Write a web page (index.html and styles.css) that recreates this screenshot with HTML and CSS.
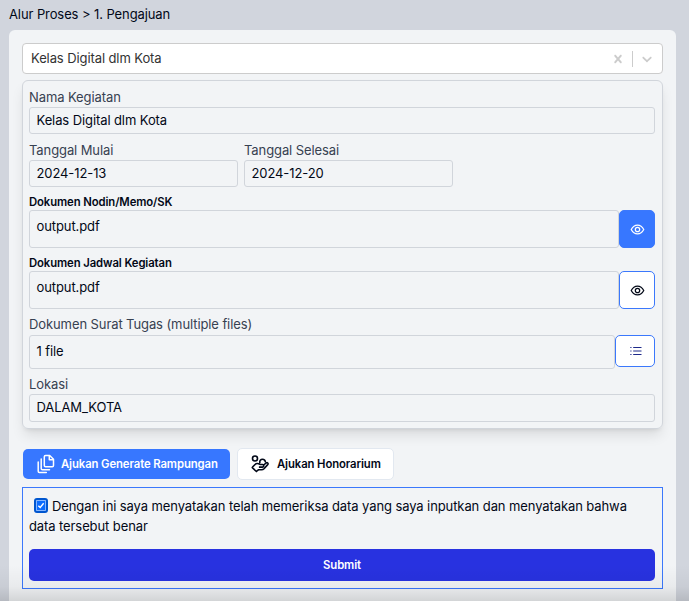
FILE: index.html
```html
<!DOCTYPE html>
<html lang="id">
<head>
<meta charset="utf-8">
<title>Pengajuan</title>
<link rel="stylesheet" href="styles.css">
</head>
<body>
<nav class="crumbs">Alur Proses &gt; 1. Pengajuan</nav>
<main class="panel">
  <div class="select">
    <span class="select-value">Kelas Digital dlm Kota</span>
    <svg class="clear" viewBox="0 0 20 20"><path d="M14.348 14.849c-0.469 0.469-1.229 0.469-1.697 0l-2.651-3.030-2.651 3.029c-0.469 0.469-1.229 0.469-1.697 0-0.469-0.469-0.469-1.229 0-1.697l2.758-3.150-2.759-3.152c-0.469-0.469-0.469-1.228 0-1.697s1.228-0.469 1.697 0l2.652 3.031 2.651-3.031c0.469-0.469 1.228-0.469 1.697 0s0.469 1.229 0 1.697l-2.758 3.152 2.758 3.150c0.469 0.469 0.469 1.229 0 1.698z"/></svg>
    <span class="separator"></span>
    <svg class="chevron" viewBox="0 0 20 20"><path d="M4.516 7.548c0.436-0.446 1.043-0.481 1.576 0l3.908 3.747 3.908-3.747c0.533-0.481 1.141-0.446 1.574 0 0.436 0.445 0.408 1.197 0 1.615-0.406 0.418-4.695 4.502-4.695 4.502-0.217 0.223-0.502 0.335-0.787 0.335s-0.57-0.112-0.789-0.335c0 0-4.287-4.084-4.695-4.502s-0.436-1.17 0-1.615z"/></svg>
  </div>

  <section class="card">
    <div class="field">
      <label>Nama Kegiatan</label>
      <div class="box">Kelas Digital dlm Kota</div>
    </div>
    <div class="dates">
      <div class="field"><label>Tanggal Mulai</label><div class="box">2024-12-13</div></div>
      <div class="field"><label>Tanggal Selesai</label><div class="box">2024-12-20</div></div>
    </div>
    <div class="field doc">
      <label class="strong">Dokumen Nodin/Memo/SK</label>
      <div class="row">
        <div class="box tall">output.pdf</div>
        <button class="view filled"><svg class="eye" viewBox="0 0 24 24"><path d="M2 12C4.300 7.500 7.700 5 12 5s7.700 2.500 10 7c-2.300 4.500-5.700 7-10 7s-7.700-2.500-10-7z"/><circle cx="12" cy="12" r="3.500"/></svg></button>
      </div>
    </div>
    <div class="field doc">
      <label class="strong">Dokumen Jadwal Kegiatan</label>
      <div class="row">
        <div class="box tall">output.pdf</div>
        <button class="view"><svg class="eye" viewBox="0 0 24 24"><path d="M2 12C4.300 7.500 7.700 5 12 5s7.700 2.500 10 7c-2.300 4.500-5.700 7-10 7s-7.700-2.500-10-7z"/><circle cx="12" cy="12" r="3.500"/></svg></button>
      </div>
    </div>
    <div class="field files">
      <label>Dokumen Surat Tugas (multiple files)</label>
      <div class="row">
        <div class="box mid">1 file</div>
        <button class="view list"><svg viewBox="0 0 12 10"><path d="M3.200 1.500H11.500M3.200 5H11.500M3.200 8.500H11.500M.3 1.500h1.200M.3 5h1.200M.3 8.500h1.200"/></svg></button>
      </div>
    </div>
    <div class="field place">
      <label>Lokasi</label>
      <div class="box">DALAM_KOTA</div>
    </div>
  </section>

  <div class="tabs">
    <button class="tab active"><svg class="copy" viewBox="0 0 18 20"><path d="M8.500 1.500h4.200l3.800 3.800v6.200q0 1.200-1.200 1.200H8.500q-1.200 0-1.200-1.200V2.700q0-1.200 1.200-1.200zM12.300 1.700v4h4M4.200 5v9.500q0 1.200 1.200 1.200h7.100M1.200 8v9.300q0 1.200 1.200 1.200h6.900"/></svg><span>Ajukan Generate Rampungan</span></button>
    <button class="tab"><svg class="hand" viewBox="0 0 18 18"><circle cx="4" cy="3.500" r="2.500"/><path d="M8.900 8.200C8.300 5.800 9.800 4.300 11.500 4.300s2.900 1.300 2.800 3M1.300 12.300 3.800 9.700C5 8.400 6.400 8.300 7.600 8.800l1.700.7h2.200c1.700 0 1.800 2.500 0 2.600H7.900M12.700 10l2.200-1.900c1.500-1.100 2.800.3 1.800 1.500l-3.700 4.200c-.8.8-1.400 1-2.400 1H7.400l-1.700 1.400M.8 12.200l5.100 4.800"/></svg><span>Ajukan Honorarium</span></button>
  </div>

  <section class="agreement">
    <p><span class="check"><svg viewBox="0 0 10 10"><path d="M1.700 5.200 4 7.500 8.300 2.200"/></svg></span>Dengan ini saya menyatakan telah memeriksa data yang saya inputkan dan menyatakan bahwa<br>data tersebut benar</p>
    <button class="submit">Submit</button>
  </section>
</main>
<div class="fade"></div>
</body>
</html>
```
FILE: styles.css
```css
* { box-sizing: border-box; }
body {
  margin: 0;
  height: 601px;
  overflow: hidden;
  display: flex;
  flex-direction: column;
  background: #d1d5dd;
  color: #020817;
  font: 13px/20px Inter, "Liberation Sans", sans-serif;
  letter-spacing: -.095px;
}
button { font: inherit; color: inherit; letter-spacing: inherit; margin: 0; padding: 0; }
svg { display: block; flex: none; fill: none; stroke: currentColor; }
.crumbs { height: 30px; padding: 4px 9px; flex: none; }
.panel {
  flex: 1;
  margin: 0 13px 0 9px;
  padding: 13px 13px 0;
  background: #f2f4f6;
  border-radius: 6px 6px 0 0;
}
.select {
  height: 31px;
  display: flex;
  align-items: center;
  background: #fff;
  border: 1px solid #ccc;
  border-radius: 4px;
  padding: 0 7px 0 8px;
  color: #333;
}
.select-value { flex: 1; padding-bottom: 1px; }
.select svg { width: 16px; height: 16px; fill: #ccc; stroke: none; }
.separator { width: 1px; height: 16px; background: #ccc; margin: 0 6px; }
.card {
  height: 349px;
  margin-top: 6px;
  padding: 7px 7px 0 6px;
  border: 1px solid #d1d5db;
  border-radius: 6px;
  box-shadow: 0 8px 13px -2px rgba(0,0,0,.1), 0 3px 5px -3px rgba(0,0,0,.12);
}
.field label { display: block; height: 19px; line-height: 19px; color: #374151; }
.field label.strong { height: 15px; line-height: 15px; font-size: 11.300px; font-weight: 600; color: #020817; }
.box {
  height: 27px;
  padding: 0 7px 0 6.500px;
  line-height: 25px;
  border: 1px solid #d1d5db;
  border-radius: 3px;
}
.dates { display: flex; gap: 6px; margin-top: 7px; }
.dates .field { width: 209px; }
.doc { margin-top: 8px; }
.row { display: flex; align-items: flex-start; }
.row .box { flex: 1; }
.box.tall { height: 38px; line-height: 30px; }
.box.mid { height: 34px; line-height: 31px; }
.files { margin-top: 6px; }
.files label { height: 20px; }
.place { margin-top: 6px; }
.place .box { height: 28px; }
.view {
  width: 36px;
  height: 38px;
  display: flex;
  align-items: center;
  justify-content: center;
  background: #fff;
  border: 1px solid #3b78fc;
  border-radius: 5px;
}
.view.filled { background: #3777ff; color: #fff; }
.view.list { width: 40px; height: 32px; color: #1e2a8a; }
.view.list svg { width: 12px; height: 10px; stroke-width: 1; margin: 0 0 1px 1px; }
.eye { width: 15px; height: 15px; stroke-width: 2; }
.tabs { display: flex; gap: 7px; margin: 19px 0 0 1px; height: 32px; align-items: center; }
.tab {
  height: 32px;
  width: 157px;
  display: flex;
  align-items: center;
  gap: 8px;
  padding: 0 0 0 13px;
  background: #fff;
  border: 1px solid #e2e8f0;
  border-radius: 5px;
  font-size: 11.300px;
  font-weight: 600;
  white-space: nowrap;
}
.tab.active { width: 207px; height: 30px; background: #3777ff; border: 0; color: #fff; padding-left: 14px; gap: 6px; }
.copy { width: 18px; height: 20px; stroke-width: 1.500; stroke-linejoin: round; stroke-linecap: round; }
.hand { width: 18px; height: 18px; stroke-width: 1.600; stroke-linejoin: round; }
.agreement {
  height: 102px;
  margin-top: 7px;
  padding: 8px 7px 0 6px;
  border: 1px solid #3b78fc;
}
.agreement p { margin: 0; height: 53px; white-space: nowrap; }
.check {
  display: inline-block;
  width: 14px;
  height: 15px;
  margin: 0 4px 0 5px;
  padding: 1px;
  vertical-align: -2px;
  border-radius: 3px;
  border: 2px solid #0056cf;
  background: #0a6cff;
  box-shadow: inset 0 0 0 .5px #fff;
}
.check svg { width: 8px; height: 9px; color: #fff; stroke-width: 1.700; }
.submit {
  display: block;
  width: 100%;
  height: 32px;
  background: #2832e0;
  border: 0;
  border-radius: 5px;
  color: #fff;
  font-size: 11.300px;
  font-weight: 600;
}
.fade {
  position: absolute;
  left: 0;
  right: 0;
  top: 565px;
  height: 36px;
  background: linear-gradient(transparent, rgba(0,0,0,.04) 60%, rgba(0,0,0,.13));
}
```
